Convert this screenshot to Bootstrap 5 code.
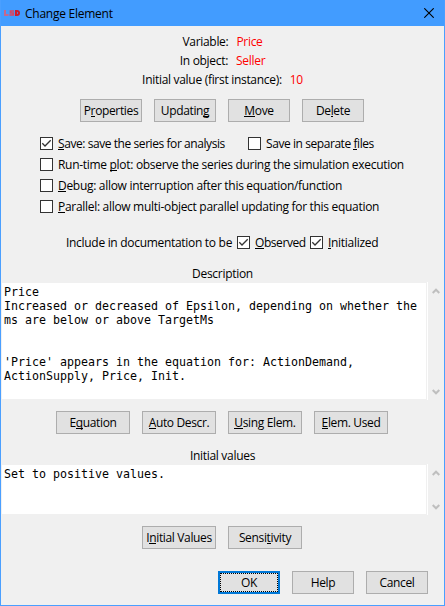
<!DOCTYPE html>
<html lang="en">
<head>
<meta charset="utf-8">
<meta name="viewport" content="width=device-width, initial-scale=1">
<title>Change Element</title>
<link href="https://cdn.jsdelivr.net/npm/bootstrap@5.3.0/dist/css/bootstrap.min.css" rel="stylesheet">
<style>
body{font-family:"Open Sans","Noto Sans",sans-serif;font-size:12px;line-height:19px;letter-spacing:-.3px;color:#000;background:#f0f0f0;overflow:hidden}
.window{width:445px;height:606px;border:1px solid #4a9fff;border-top:0;background:#f0f0f0;white-space:nowrap}
.titlebar{height:26px;background:#429cff;padding:0 10px 0 3px}
.app-title{margin-left:5px;letter-spacing:-.25px}
.facts{padding-top:6px}
.fact-value{color:#f00}
.facts .fact{height:19px}
.gap-dlg{gap:12px}
.btn-dlg{--bs-btn-padding-x:0;--bs-btn-padding-y:0;--bs-btn-font-size:12px;--bs-btn-line-height:19px;--bs-btn-border-radius:0;--bs-btn-color:#000;--bs-btn-bg:#e1e1e1;--bs-btn-border-color:#adadad;--bs-btn-hover-bg:#e5f1fb;--bs-btn-hover-border-color:#0078d7;width:62px;height:23px;letter-spacing:-.35px}
.btn-wide{width:74px}
.btn-default{border:2px solid #0078d7;padding:0}
.btn-default span{display:block;height:19px;line-height:17px;border:1px dotted #000}
.ops,.tools{padding-right:1px}
.ops{margin-top:10px}
.tools{margin-top:11px}
.checks{padding:11px 0 0 39px}
.check-row{height:21px}
.tick{appearance:none;width:13px;height:13px;margin:0 5px 0 0;border:1px solid #333;background:#fff;flex:none}
.tick:checked{background:#fff url("data:image/svg+xml,%3Csvg xmlns='http://www.w3.org/2000/svg' viewBox='0 0 11 11'%3E%3Cpath d='M1.3 5.3 4 8 9.7 2.3' fill='none' stroke='%23333' stroke-width='1.3'/%3E%3C/svg%3E") center/11px 11px no-repeat}
.separate{margin-left:23px}
.save-label{width:167px}
.tight{letter-spacing:-.43px}
.docs{padding-left:65px;height:21px;margin-top:15px}
.docs-lead{width:171px}
.observed{width:55px}
.caption-line{height:18px;line-height:19px}
.desc-title{margin-top:11px}
.init-title{margin-top:12px}
.pane{height:118px}
.pane-short{height:51px}
.memo{width:424px;margin:1px 1px 1px 1px;padding:2px 2px;background:#fff;font-family:"DejaVu Sans Mono",monospace;font-size:11.63px;line-height:14px;letter-spacing:0;white-space:pre}
.rail{width:17px;border-left:1px solid #fff;padding:6px 0 5px 4px}
.rail svg{display:block}
.foot{margin-bottom:11px}
u{text-decoration:none;background:linear-gradient(#000,#000) 0 14px/100% 1px no-repeat}
</style>
<script src="https://cdn.jsdelivr.net/npm/bootstrap@5.3.0/dist/js/bootstrap.bundle.min.js"></script>
</head>
<body>
<main class="window d-flex flex-column">
  <header class="titlebar d-flex align-items-center">
    <svg width="16" height="6" viewBox="0 0 16 6" fill="none"><path d="M1 0v5h3.5" stroke="#c4688f" stroke-width="2"/><path d="M10 1H6.5v2H9.3v2H5.5" stroke="#dc4560" stroke-width="1.7"/><path d="M12 1v4h1q2 0 2-2t-2-2z" stroke="#d01c2c" stroke-width="2"/></svg>
    <span class="app-title flex-grow-1">Change Element</span>
    <svg width="10" height="10" viewBox="0 0 10 10"><path d="M.3.3l9.4 9.4M9.7.3.3 9.7" stroke="#000" stroke-width="1.1"/></svg>
  </header>

  <section class="facts">
    <div class="fact d-flex justify-content-center gap-2"><span>Variable:</span><span class="fact-value">Price</span></div>
    <div class="fact d-flex justify-content-center gap-2"><span>In object:</span><span class="fact-value">Seller</span></div>
    <div class="fact d-flex justify-content-center gap-2"><span>Initial value (first instance):</span><span class="fact-value">10</span></div>
  </section>

  <div class="d-flex justify-content-center gap-dlg ops">
    <button class="btn btn-dlg">P<u>r</u>operties</button>
    <button class="btn btn-dlg">Updatin<u>g</u></button>
    <button class="btn btn-dlg"><u>M</u>ove</button>
    <button class="btn btn-dlg">De<u>l</u>ete</button>
  </div>

  <section class="checks">
    <div class="check-row d-flex align-items-center">
      <label class="d-flex align-items-center"><input class="tick" type="checkbox" checked><span class="save-label tight"><u>S</u>ave: save the series for analysis</span></label>
      <label class="d-flex align-items-center separate"><input class="tick" type="checkbox"><span class="tight">Save in separate <u>f</u>iles</span></label>
    </div>
    <label class="check-row d-flex align-items-center"><input class="tick" type="checkbox"><span>Run-time <u>p</u>lot: observe the series during the simulation execution</span></label>
    <label class="check-row d-flex align-items-center"><input class="tick" type="checkbox"><span><u>D</u>ebug: allow interruption after this equation/function</span></label>
    <label class="check-row d-flex align-items-center"><input class="tick" type="checkbox"><span><u>P</u>arallel: allow multi-object parallel updating for this equation</span></label>
  </section>

  <div class="docs d-flex align-items-center">
    <span class="docs-lead">Include in documentation to be</span>
    <label class="d-flex align-items-center"><input class="tick" type="checkbox" checked><span class="observed tight"><u>O</u>bserved</span></label>
    <label class="d-flex align-items-center"><input class="tick" type="checkbox" checked><span><u>I</u>nitialized</span></label>
  </div>

  <div class="caption-line text-center desc-title">Description</div>
  <div class="pane d-flex">
    <div class="memo">Price
Increased or decreased of Epsilon, depending on whether the
ms are below or above TargetMs


'Price' appears in the equation for: ActionDemand,
ActionSupply, Price, Init.</div>
    <div class="rail d-flex flex-column justify-content-between">
      <svg width="8" height="6" viewBox="0 0 8 6"><path d="M.7 5 4 1.7 7.3 5" fill="none" stroke="#bfbfbf" stroke-width="2"/></svg>
      <svg width="8" height="6" viewBox="0 0 8 6"><path d="M.7 1 4 4.3 7.3 1" fill="none" stroke="#bfbfbf" stroke-width="2"/></svg>
    </div>
  </div>

  <div class="d-flex justify-content-center gap-dlg tools">
    <button class="btn btn-dlg btn-wide">E<u>q</u>uation</button>
    <button class="btn btn-dlg btn-wide"><u>A</u>uto Descr.</button>
    <button class="btn btn-dlg btn-wide"><u>U</u>sing Elem.</button>
    <button class="btn btn-dlg btn-wide"><u>E</u>lem. Used</button>
  </div>

  <div class="caption-line text-center init-title">Initial values</div>
  <div class="pane pane-short d-flex">
    <div class="memo">Set to positive values.</div>
    <div class="rail d-flex flex-column justify-content-between">
      <svg width="8" height="6" viewBox="0 0 8 6"><path d="M.7 5 4 1.7 7.3 5" fill="none" stroke="#bfbfbf" stroke-width="2"/></svg>
      <svg width="8" height="6" viewBox="0 0 8 6"><path d="M.7 1 4 4.3 7.3 1" fill="none" stroke="#bfbfbf" stroke-width="2"/></svg>
    </div>
  </div>

  <div class="d-flex justify-content-center gap-dlg tools">
    <button class="btn btn-dlg btn-wide">I<u>n</u>itial Values</button>
    <button class="btn btn-dlg btn-wide">Sensi<u>t</u>ivity</button>
  </div>

  <footer class="d-flex justify-content-end gap-dlg pe-3 mt-auto foot">
    <button class="btn btn-dlg btn-default"><span>OK</span></button>
    <button class="btn btn-dlg">Help</button>
    <button class="btn btn-dlg">Cancel</button>
  </footer>
</main>
</body>
</html>
